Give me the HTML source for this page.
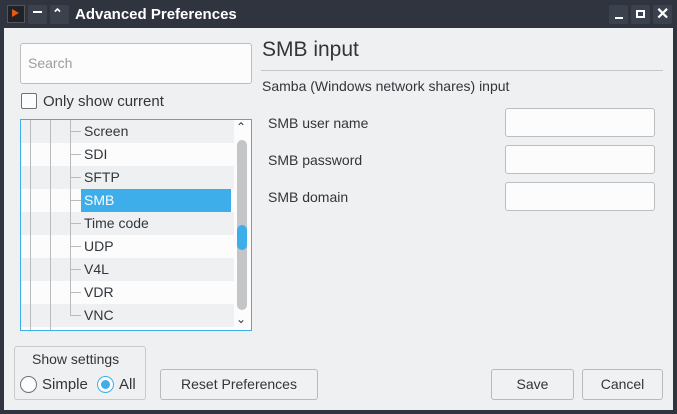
<!DOCTYPE html>
<html><head><style>
*{box-sizing:border-box;margin:0;padding:0}
body{width:677px;height:414px;background:#2f343f;font-family:"Liberation Sans",sans-serif;font-size:14px;color:#31363b;position:relative;overflow:hidden}
.a{position:absolute}
#body{left:4px;top:28px;width:669px;height:382px;background:#eff0f1}
.tb{top:5px;width:19px;height:19px;background:#3b414d;border-radius:2px}
.inp{background:#fcfcfc;border:1px solid #bcbebf;border-radius:3px}
.btn{background:#f0f1f2;border:1px solid #b8babc;border-radius:3px;text-align:center;line-height:28px}
.row{left:0;width:213px;height:23px;line-height:23px}
.row span{position:absolute;left:63px}
</style></head><body>
<div class="a" style="left:7px;top:5px;width:18px;height:18px;background:#1f2329;border:1px solid #555"></div>
<div class="a" style="left:12px;top:9px;width:0;height:0;border-left:7px solid #e8590c;border-top:4px solid transparent;border-bottom:4px solid transparent"></div>
<div class="a tb" style="left:28px"></div><div class="a" style="left:33px;top:11px;width:9px;height:2px;background:#fff"></div>
<div class="a tb" style="left:50px"></div><div class="a" style="left:52px;top:6px;color:#fff;font-size:13px;font-weight:bold">&#8963;</div>
<div class="a" style="left:75px;top:6px;color:#fff;font-weight:bold;font-size:15px">Advanced Preferences</div>
<div class="a tb" style="left:609px"></div><div class="a" style="left:615px;top:17px;width:8px;height:2px;background:#fff"></div>
<div class="a tb" style="left:631px"></div><div class="a" style="left:636px;top:10px;width:9px;height:8px;border:2px solid #fff"></div>
<div class="a tb" style="left:653px"></div><div class="a" style="left:656px;top:4px;color:#fff;font-size:16px;font-weight:bold">✕</div>
<div class="a" id="body"></div>
<div class="a inp" style="left:20px;top:43px;width:232px;height:41px"></div>
<div class="a" style="left:28px;top:55px;color:#9a9c9e">Search</div>
<div class="a" style="left:21px;top:93px;width:16px;height:16px;border:1px solid #6e7175;border-radius:2px;background:#fcfcfc"></div>
<div class="a" style="left:43px;top:93px;font-size:15px">Only show current</div>
<div class="a" style="left:20px;top:119px;width:232px;height:212px;border:1px solid #3daee9;background:#fcfcfc;overflow:hidden">
<div class="a" style="left:0;top:0;width:230px;height:210px">
<div class="a row" style="top:0;background:#eff0f1"><span>Screen</span></div>
<div class="a row" style="top:23px"><span>SDI</span></div>
<div class="a row" style="top:46px;background:#eff0f1"><span>SFTP</span></div>
<div class="a row" style="top:69px"><div class="a" style="left:60px;width:150px;height:23px;background:#3daee9"></div><span style="color:#fcfcfc">SMB</span></div>
<div class="a row" style="top:92px;background:#eff0f1"><span>Time code</span></div>
<div class="a row" style="top:115px"><span>UDP</span></div>
<div class="a row" style="top:138px;background:#eff0f1"><span>V4L</span></div>
<div class="a row" style="top:161px"><span>VDR</span></div>
<div class="a row" style="top:184px;background:#eff0f1"><span>VNC</span></div>
<div class="a" style="left:9px;top:0;width:1px;height:210px;background:#bbb"></div>
<div class="a" style="left:29px;top:0;width:1px;height:210px;background:#bbb"></div>
<div class="a" style="left:49px;top:0;width:1px;height:196px;background:#bbb"></div>
<div class="a" style="left:50px;top:11px;width:10px;height:1px;background:#bbb;box-shadow:0 23px #bbb,0 46px #bbb,0 69px #bbb,0 92px #bbb,0 115px #bbb,0 138px #bbb,0 161px #bbb,0 184px #bbb"></div>
<div class="a" style="left:216px;top:20px;width:10px;height:170px;background:#c4c5c6;border-radius:5px"></div>
<div class="a" style="left:216px;top:105px;width:10px;height:25px;background:#3daee9;border-radius:5px"></div>
<div class="a" style="left:215px;top:0px;font-size:12px">&#8963;</div>
<div class="a" style="left:215px;top:192px;font-size:12px">&#8964;</div>
</div></div>
<div class="a" style="left:14px;top:346px;width:132px;height:54px;border:1px solid #c8cacc;border-radius:3px"></div>
<div class="a" style="left:32px;top:351px">Show settings</div>
<div class="a" style="left:20px;top:376px;width:17px;height:17px;border:1px solid #6e7175;border-radius:50%;background:#fcfcfc"></div>
<div class="a" style="left:42px;top:376px;font-size:15px">Simple</div>
<div class="a" style="left:97px;top:376px;width:17px;height:17px;border:1px solid #3daee9;border-radius:50%;background:#fcfcfc"></div>
<div class="a" style="left:101px;top:380px;width:9px;height:9px;border-radius:50%;background:#3daee9"></div>
<div class="a" style="left:119px;top:376px;font-size:15px">All</div>
<div class="a btn" style="left:160px;top:369px;width:158px;height:31px">Reset Preferences</div>
<div class="a btn" style="left:491px;top:369px;width:83px;height:31px">Save</div>
<div class="a btn" style="left:582px;top:369px;width:81px;height:31px">Cancel</div>
<div class="a" style="left:262px;top:38px;font-size:21px">SMB input</div>
<div class="a" style="left:261px;top:70px;width:402px;height:1px;background:#c3c5c7"></div>
<div class="a" style="left:262px;top:78px">Samba (Windows network shares) input</div>
<div class="a" style="left:268px;top:115px">SMB user name</div>
<div class="a" style="left:268px;top:152px">SMB password</div>
<div class="a" style="left:268px;top:189px">SMB domain</div>
<div class="a inp" style="left:505px;top:108px;width:150px;height:29px"></div>
<div class="a inp" style="left:505px;top:145px;width:150px;height:29px"></div>
<div class="a inp" style="left:505px;top:182px;width:150px;height:29px"></div>
</body></html>
